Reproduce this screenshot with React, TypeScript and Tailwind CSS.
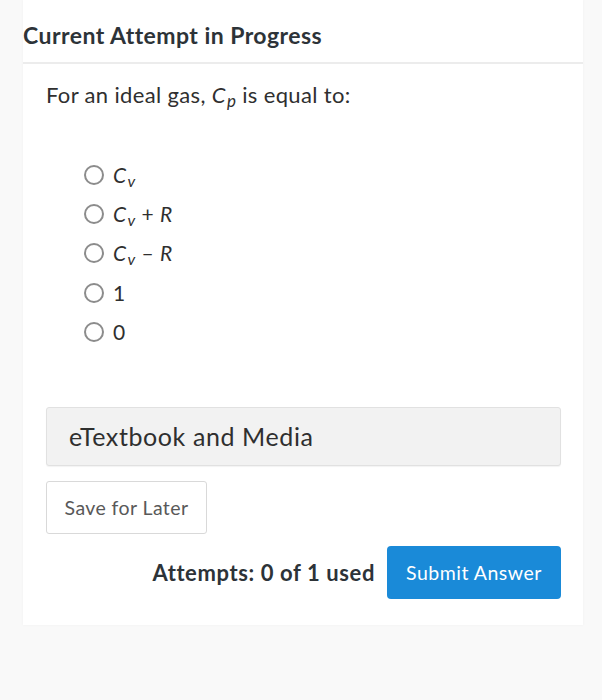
import React from "react";

function Radio() {
  return <span className="inline-block w-[20px] h-[20px] rounded-full border-2 border-[#8c8c8c] bg-white shrink-0" />;
}

function Cv() {
  return (
    <span>
      <i>C</i>
      <sub className="text-[16px] italic relative top-[4px] align-baseline ml-[1px]">v</sub>
    </span>
  );
}

export default function App() {
  const options: React.ReactNode[] = [
    <Cv />,
    <span className="inline-flex items-baseline gap-[6px]"><Cv /><span>+</span><i>R</i></span>,
    <span className="inline-flex items-baseline gap-[6px]"><Cv /><span>–</span><i>R</i></span>,
    <span>1</span>,
    <span>0</span>,
  ];
  return (
    <div className="min-h-[700px] bg-[#f9f9f9] pl-[23px] pr-[19px]" style={{ fontFamily: "Lato, 'Open Sans', sans-serif" }}>
      <div className="bg-white w-[560px] pb-[26px] shadow-[0_0_3px_rgba(0,0,0,0.04)]">
        <div className="pt-[21px] pb-[13px] border-b-2 border-[#ececec]">
          <h2 className="text-[23px] leading-[28px] font-bold text-[#2d3338] tracking-[0.45px]">Current Attempt in Progress</h2>
        </div>
        <div className="pl-[23px] pr-[22px]">
          <p className="mt-[17px] text-[22px] leading-[28px] text-[#2f2f2f] tracking-[0.35px]">
            For an ideal gas, <i>C</i><sub className="text-[17px] italic relative top-[4px] align-baseline ml-[1px]">p</sub> is equal to:
          </p>
          <div className="mt-[46px] pl-[38px] flex flex-col text-[21px] text-[#2f2f2f] tracking-[0.3px]">
            {options.map((o, i) => (
              <div key={i} className="h-[39.3px] flex items-center gap-[9px]">
                <Radio />
                <span className="leading-[24px]">{o}</span>
              </div>
            ))}
          </div>
          <div className="mt-[56px] h-[59px] border border-[#e1e1e1] bg-[#f2f2f2] rounded-[3px] flex items-center pl-[22px] text-[25px] text-[#2f2f2f] tracking-[0.6px] shadow-[0_1px_1px_rgba(0,0,0,0.05)]">
            eTextbook and Media
          </div>
          <button className="mt-[15px] h-[53px] w-[161px] border border-[#d9d9d9] rounded-[3px] bg-white text-[19.5px] tracking-[0.4px] text-[#595959] flex items-center justify-center">
            Save for Later
          </button>
          <div className="mt-[12px] flex items-center justify-end gap-[12px]">
            <span className="text-[22px] font-bold text-[#2d3338] tracking-[0.6px]">Attempts: 0 of 1 used</span>
            <button className="h-[53px] w-[174px] rounded-[4px] bg-[#1a8ad8] text-white text-[19.5px] tracking-[0.5px] flex items-center justify-center">
              Submit Answer
            </button>
          </div>
        </div>
      </div>
    </div>
  );
}
